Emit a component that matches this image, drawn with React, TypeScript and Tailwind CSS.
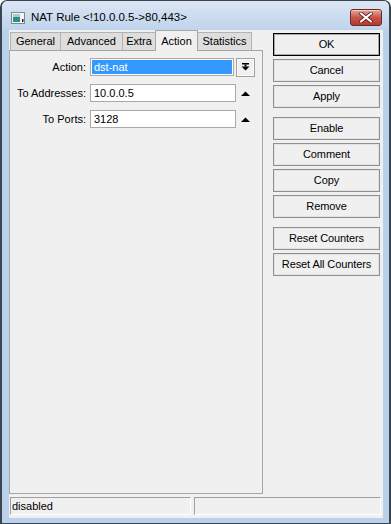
import React from "react";

function Btn({ label, def }: { label: string; def?: boolean }) {
  return (
    <div
      className={
        "h-[23px] w-[107px] flex items-center justify-center bg-[#f0f0f0] text-[11px] text-black tracking-[-0.1px] " +
        (def
          ? "border border-black shadow-[inset_0_0_0_1px_#a8a8a8]"
          : "border border-[#8f8f8f] shadow-[inset_0_0_0_1px_#e3e3e3]")
      }
    >
      {label}
    </div>
  );
}

function UpTri() {
  return (
    <div className="w-[19px] h-[18px] flex items-center justify-center">
      <svg width="9" height="5" viewBox="0 0 9 5">
        <polygon points="0,5 9,5 4.5,0.5" fill="#000" />
      </svg>
    </div>
  );
}

export default function App() {
  const tabs = [
    { t: "General", w: "w-[50px]" },
    { t: "Advanced", w: "w-[62px]" },
    { t: "Extra", w: "w-[33px]" },
  ];
  return (
    <div className="w-[391px] h-[524px] overflow-hidden bg-[#b9d1ea] flex flex-col border-x-2 border-b border-t border-[#3a4550] rounded-t-[7px] font-['Liberation_Sans',Arial,sans-serif]">
      {/* title bar */}
      <div className="h-[29px] flex items-start bg-gradient-to-b from-[#dbe6f4] to-[#bfd4ed] shrink-0">
        <div className="mt-[11px] ml-[9px]">
          <svg width="14" height="12" viewBox="0 0 14 12">
            <rect x="0.5" y="0.5" width="13" height="11" fill="#f4f4f4" stroke="#7d8790" />
            <rect x="2" y="2" width="7" height="8" fill="#2f8f87" />
            <rect x="2" y="2" width="7" height="3" fill="#9fd0c9" />
            <rect x="11" y="7" width="1.5" height="3" fill="#222" />
          </svg>
        </div>
        <div className="ml-[6px] mt-[9px] text-[11.5px] text-black leading-[14px] whitespace-nowrap">
          NAT Rule &lt;!10.0.0.5-&gt;80,443&gt;
        </div>
        <div className="ml-auto mr-[7px] mt-[8px] w-[32px] h-[17px] rounded-[3px] border border-[#6b2a24] bg-gradient-to-b from-[#e3a79c] via-[#c9544a] to-[#b8382c] flex items-center justify-center shadow-[inset_0_1px_0_#f3c9c1]">
          <svg width="14" height="11" viewBox="0 0 14 11">
            <path d="M2 1.5 L12 9.5 M12 1.5 L2 9.5" stroke="#5a1c16" strokeWidth="3.6" strokeLinecap="round" />
            <path d="M2 1.5 L12 9.5 M12 1.5 L2 9.5" stroke="#ffffff" strokeWidth="2.2" strokeLinecap="round" />
          </svg>
        </div>
      </div>

      {/* content */}
      <div className="ml-[7px] mr-[6px] mb-[5px] flex-1 bg-[#f0f0f0] flex flex-col">
        <div className="flex h-[464px]">
          {/* tab area */}
          <div className="w-[254px] flex flex-col">
            <div className="h-[20px] flex items-end pl-[1px]">
              {tabs.map((x) => (
                <div
                  key={x.t}
                  className={
                    x.w +
                    " h-[18px] bg-[#dedede] border-t border-l border-[#b3b3b3] flex items-center justify-center text-[11px] text-black"
                  }
                >
                  {x.t}
                </div>
              ))}
              <div className="relative z-10 w-[43px] h-[21px] -mb-px bg-[#f0f0f0] border-t border-x border-[#a6a6a6] flex items-start justify-center pt-[2px] text-[11px] text-black">
                Action
              </div>
              <div className="w-[54px] h-[18px] bg-[#dedede] border-t border-r border-[#b3b3b3] flex items-center justify-center text-[11px] text-black">
                Statistics
              </div>
            </div>
            <div className="flex-1 border border-[#a6a6a6] bg-[#f0f0f0] flex flex-col gap-[8px] pt-[7px]">
              {/* Action row */}
              <div className="flex items-center h-[18px]">
                <div className="w-[76px] text-right text-[11px] text-black">Action:</div>
                <div className="ml-[4px] w-[144px] h-[18px] border border-[#a9a9a9] bg-white p-px">
                  <div className="h-full bg-[#3399ff] text-white text-[11px] leading-[14px] pl-[2px]">dst-nat</div>
                </div>
                <div className="ml-[2px] w-[19px] h-[19px] border border-[#a0a0a0] bg-[#f0f0f0] flex items-center justify-center shadow-[inset_0_0_0_1px_#fafafa]">
                  <svg width="9" height="8" viewBox="0 0 9 8">
                    <rect x="1" y="0" width="7" height="1.5" fill="#000" />
                    <rect x="3.5" y="1.5" width="2" height="2" fill="#000" />
                    <polygon points="0.5,3.5 8.5,3.5 4.5,7.5" fill="#000" />
                  </svg>
                </div>
              </div>
              {/* To Addresses */}
              <div className="flex items-center h-[18px]">
                <div className="w-[76px] text-right text-[11px] text-black whitespace-nowrap">To Addresses:</div>
                <div className="ml-[4px] w-[146px] h-[18px] border border-[#a9a9a9] bg-white text-[11px] text-black leading-[16px] pl-[3px]">
                  10.0.0.5
                </div>
                <UpTri />
              </div>
              {/* To Ports */}
              <div className="flex items-center h-[18px]">
                <div className="w-[76px] text-right text-[11px] text-black">To Ports:</div>
                <div className="ml-[4px] w-[146px] h-[18px] border border-[#a9a9a9] bg-white text-[11px] text-black leading-[16px] pl-[3px]">
                  3128
                </div>
                <UpTri />
              </div>
            </div>
          </div>

          {/* buttons */}
          <div className="ml-[10px] pt-[3px] flex flex-col">
            <div className="flex flex-col gap-[3px]">
              <Btn label="OK" def />
              <Btn label="Cancel" />
              <Btn label="Apply" />
            </div>
            <div className="flex flex-col gap-[3px] mt-[9px]">
              <Btn label="Enable" />
              <Btn label="Comment" />
              <Btn label="Copy" />
              <Btn label="Remove" />
            </div>
            <div className="flex flex-col gap-[3px] mt-[9px]">
              <Btn label="Reset Counters" />
              <Btn label="Reset All Counters" />
            </div>
          </div>
        </div>

        {/* status bar */}
        <div className="mt-[3px] flex gap-[3px] pl-[1px] pr-[2px]">
          <div className="w-[181px] h-[18px] border-t border-l border-[#a0a0a0] border-b border-r border-b-white border-r-white text-[11px] text-black leading-[16px] pl-[1px]">
            disabled
          </div>
          <div className="flex-1 h-[18px] border-t border-l border-[#a0a0a0] border-b border-r border-b-white border-r-white" />
        </div>
      </div>
    </div>
  );
}
